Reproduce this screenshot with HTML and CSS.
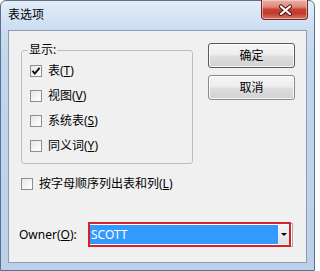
FILE: index.html
```html
<!DOCTYPE html>
<html lang="zh-CN">
<head>
<meta charset="utf-8">
<title>表选项</title>
<link rel="stylesheet" href="styles.css">
</head>
<body>
<div class="window">
  <div class="titlebar">
    <span class="title">表选项</span>
    <div class="close">
      <svg width="47" height="20" viewBox="0 0 47 20">
        <path d="M20 6.5 L29 14 M29 6.5 L20 14" stroke="#4a1a14" stroke-width="4.2" stroke-linecap="round" fill="none"/>
        <path d="M20 6.5 L29 14 M29 6.5 L20 14" stroke="#ffffff" stroke-width="2.2" stroke-linecap="round" fill="none"/>
      </svg>
    </div>
  </div>
  <div class="client">
    <div class="top-row">
      <fieldset class="group">
        <legend>显示:</legend>
        <div class="row"><span class="box"><svg width="10" height="10" viewBox="0 0 10 10"><path d="M1.5 4.8 L3.8 7.6 L8.6 1.8" stroke="#111" stroke-width="1.9" fill="none"/></svg></span><span>表(<u>T</u>)</span></div>
        <div class="row"><span class="box"></span><span>视图(<u>V</u>)</span></div>
        <div class="row"><span class="box"></span><span>系统表(<u>S</u>)</span></div>
        <div class="row"><span class="box"></span><span>同义词(<u>Y</u>)</span></div>
      </fieldset>
      <div class="buttons">
        <div class="btn btn-default">确定</div>
        <div class="btn">取消</div>
      </div>
    </div>
    <div class="row alpha"><span class="box"></span><span>按字母顺序列出表和列(<u>L</u>)</span></div>
    <div class="owner-row">
      <span class="owner-label">Owner(<u>O</u>):</span>
      <div class="combo">
        <div class="combo-field">SCOTT</div>
        <div class="combo-drop"><span class="arrow"></span></div>
        <div class="highlight"></div>
      </div>
    </div>
  </div>
</div>
</body>
</html>
```
FILE: styles.css
```css
html, body {
  margin: 0;
  padding: 0;
  width: 315px;
  height: 271px;
  overflow: hidden;
  background: #ffffff;
}

body {
  font-family: "Noto Sans", "Noto Sans CJK SC", sans-serif;
  font-size: 12px;
  color: #000;
}

.window {
  box-sizing: border-box;
  width: 315px;
  height: 271px;
  border: 1px solid #5d7089;
  border-radius: 6px 6px 0 0;
  background: linear-gradient(180deg, #e3edf8 0px, #cddef2 26px, #c3d6ed 60px, #bcd0e9 100%);
  padding: 0 7px 7px 7px;
  display: flex;
  flex-direction: column;
}

.titlebar {
  height: 29px;
  display: flex;
  justify-content: space-between;
  align-items: flex-start;
  flex-shrink: 0;
}

.title {
  margin-top: 6px;
  line-height: 16px;
  font-size: 12px;
  color: #000;
}

.close {
  width: 47px;
  height: 20px;
  margin-top: -1px;
  margin-right: -1px;
  box-sizing: border-box;
  border: 1px solid #6b2a22;
  border-top: none;
  border-radius: 0 0 4px 4px;
  background: linear-gradient(180deg, #eab1a8 0%, #e08a7e 35%, #c8402f 50%, #c23a2a 70%, #d8786a 100%);
  box-shadow: inset 0 0 0 1px rgba(255, 220, 210, 0.55);
}

.close svg {
  display: block;
  margin-left: -1px;
}

.client {
  flex: 1;
  box-sizing: border-box;
  background: #f0f0f0;
  border: 1px solid #8c9db3;
  padding: 12px 0 0 11px;
  display: flex;
  flex-direction: column;
}

.top-row {
  display: flex;
  align-items: flex-start;
  margin-left: 1px;
}

.group {
  box-sizing: border-box;
  width: 172px;
  height: 121px;
  margin: 0;
  padding: 1px 6px 5px 6px;
  border: 1px solid #b9bec4;
  border-radius: 3px;
}

.group legend {
  padding: 0 1px;
  line-height: 14px;
  font-size: 12px;
}

.row {
  height: 25px;
  display: flex;
  align-items: center;
  margin-left: 2px;
  line-height: 16px;
}

.box {
  box-sizing: border-box;
  width: 12px;
  height: 12px;
  border: 1px solid #8e8f8f;
  background: linear-gradient(135deg, #e4e4e4 0%, #f6f6f6 60%, #ffffff 100%);
  margin-right: 6px;
  flex-shrink: 0;
  display: flex;
  align-items: center;
  justify-content: center;
}

.box svg {
  display: block;
}

.buttons {
  margin-left: 15px;
  display: flex;
  flex-direction: column;
  gap: 7px;
}

.btn {
  box-sizing: border-box;
  width: 87px;
  height: 25px;
  border: 1px solid #8a8a8a;
  border-radius: 3px;
  background: linear-gradient(180deg, #f6f6f6 0%, #ededed 48%, #dedede 52%, #d2d2d2 100%);
  box-shadow: inset 0 0 0 1px rgba(255, 255, 255, 0.8);
  display: flex;
  align-items: center;
  justify-content: center;
  font-size: 12px;
  line-height: 16px;
}

.btn-default {
  border-color: #5a5a5a;
}

.alpha {
  margin-top: 10px;
  height: 20px;
  margin-left: 1px;
}

.owner-row {
  margin-top: 29px;
  display: flex;
  align-items: center;
  height: 24px;
}

.owner-label {
  width: 70px;
  margin-left: -1px;
  line-height: 16px;
}

.combo {
  position: relative;
  box-sizing: border-box;
  width: 204px;
  height: 24px;
  border: 1px solid #a9a9a9;
  background: #ffffff;
  display: flex;
  align-items: stretch;
  padding: 1px 2px 2px 0;
}

.combo-field {
  flex: 1;
  background: #3399ff;
  color: #ffffff;
  padding-left: 1px;
  line-height: 19px;
  font-size: 12px;
}

.combo-drop {
  width: 12px;
  background: linear-gradient(180deg, #f4f4f4, #e2e2e2);
  display: flex;
  align-items: center;
  justify-content: center;
}

.arrow {
  width: 0;
  height: 0;
  border-left: 3px solid transparent;
  border-right: 3px solid transparent;
  border-top: 3px solid #000;
}

.highlight {
  position: absolute;
  left: -2px;
  top: -2px;
  width: 203px;
  height: 25px;
  box-sizing: border-box;
  border: 2px solid #d3222b;
  pointer-events: none;
}
```
